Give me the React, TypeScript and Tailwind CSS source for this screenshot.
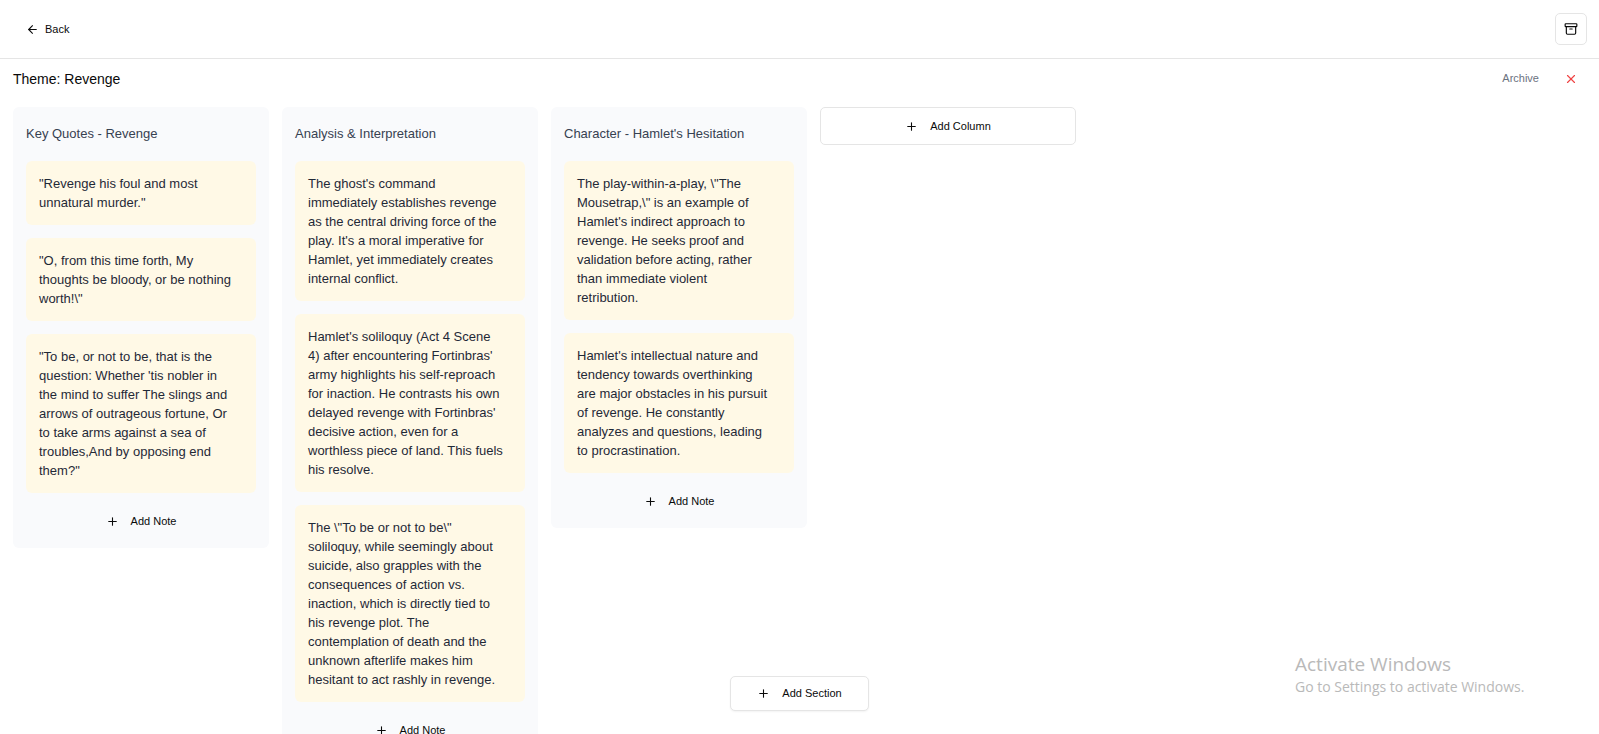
import { Archive, ArrowLeft, Plus, X } from "lucide-react";

type Column = { title: string; notes: string[] };

const columns: Column[] = [
  {
    title: "Key Quotes - Revenge",
    notes: [
      '"Revenge his foul and most unnatural murder."',
      '"O, from this time forth, My thoughts be bloody, or be nothing worth!\\"',
      '"To be, or not to be, that is the question: Whether \'tis nobler in the mind to suffer The slings and arrows of outrageous fortune, Or to take arms against a sea of troubles,And by opposing end them?"',
    ],
  },
  {
    title: "Analysis & Interpretation",
    notes: [
      "The ghost's command immediately establishes revenge as the central driving force of the play. It's a moral imperative for Hamlet, yet immediately creates internal conflict.",
      "Hamlet's soliloquy (Act 4 Scene 4) after encountering Fortinbras' army highlights his self-reproach for inaction. He contrasts his own delayed revenge with Fortinbras' decisive action, even for a worthless piece of land. This fuels his resolve.",
      'The \\"To be or not to be\\" soliloquy, while seemingly about suicide, also grapples with the consequences of action vs. inaction, which is directly tied to his revenge plot. The contemplation of death and the unknown afterlife makes him hesitant to act rashly in revenge.',
    ],
  },
  {
    title: "Character - Hamlet's Hesitation",
    notes: [
      'The play-within-a-play, \\"The Mousetrap,\\" is an example of Hamlet\'s indirect approach to revenge. He seeks proof and validation before acting, rather than immediate violent\nretribution.',
      "Hamlet's intellectual nature and tendency towards overthinking are major obstacles in his pursuit of revenge. He constantly analyzes and questions, leading to procrastination.",
    ],
  },
];

function AddButton({ label, className }: { label: string; className: string }) {
  return (
    <button
      type="button"
      className={`flex items-center justify-center gap-3 rounded-[5px] text-[11px] font-medium ${className}`}
    >
      <Plus size={13} aria-hidden="true" />
      {label}
    </button>
  );
}

function NoteColumn({ title, notes }: Column) {
  return (
    <section className="flex w-64 shrink-0 flex-col rounded-md bg-[#f9fafc] px-[13px] pt-3 pb-3">
      <h2 className="flex h-7 items-center text-[13px] leading-[19px] text-[#374151]">{title}</h2>
      <ul className="my-[14px] flex flex-col gap-[13px]">
        {notes.map((note) => (
          <li
            key={note}
            className="rounded-md bg-[#fff9e6] py-[13px] pr-5 pl-[13px] text-[13px] leading-[19px] whitespace-pre-line text-[#1f2937]"
          >
            {note}
          </li>
        ))}
      </ul>
      <AddButton label="Add Note" className="h-[29px] w-full" />
    </section>
  );
}

export default function App() {
  return (
    <div className="relative flex h-screen flex-col overflow-hidden bg-white font-['Liberation_Sans',Arial,sans-serif] text-[#0a0a0a]">
      <header className="flex shrink-0 items-center justify-between border-b border-[#e5e5e5] py-[13px] pr-3 pl-[13px]">
        <button type="button" className="flex h-8 items-center gap-[6px] px-[13px] text-[11px] font-medium">
          <ArrowLeft size={13} aria-hidden="true" />
          Back
        </button>
        <button
          type="button"
          aria-label="Archive"
          className="flex size-8 items-center justify-center rounded-[5px] border border-[#e5e5e5]"
        >
          <Archive size={14} aria-hidden="true" />
        </button>
      </header>

      <main className="min-h-0 flex-1 pt-[5px] pr-3 pl-[13px]">
        <div className="flex h-[29px] items-center justify-between">
          <h1 className="text-sm">Theme: Revenge</h1>
          <div className="flex items-center gap-4">
            <button type="button" className="h-[29px] text-[11px] font-medium text-[#6b7280]">
              Archive
            </button>
            <button
              type="button"
              aria-label="Delete section"
              className="flex h-[29px] w-8 items-center justify-center text-[#ef4444]"
            >
              <X size={14} aria-hidden="true" />
            </button>
          </div>
        </div>

        <div className="mt-[14px] flex items-start gap-[13px]">
          {columns.map((column) => (
            <NoteColumn key={column.title} {...column} />
          ))}
          <AddButton label="Add Column" className="h-[38px] w-64 shrink-0 border border-[#e5e5e5]" />
        </div>
      </main>

      <div className="pointer-events-none absolute inset-x-0 bottom-[23px] flex justify-center">
        <AddButton
          label="Add Section"
          className="pointer-events-auto h-[35px] border border-[#e5e5e5] bg-white px-[26px] shadow-xs"
        />
      </div>

      <aside className="pointer-events-none absolute right-[67px] bottom-9 w-[237px] font-['Open_Sans',sans-serif] whitespace-nowrap text-[#b9b9b9]">
        <p className="text-[19px] leading-6">Activate Windows</p>
        <p className="text-[14px] leading-[22px]">Go to Settings to activate Windows.</p>
      </aside>
    </div>
  );
}
